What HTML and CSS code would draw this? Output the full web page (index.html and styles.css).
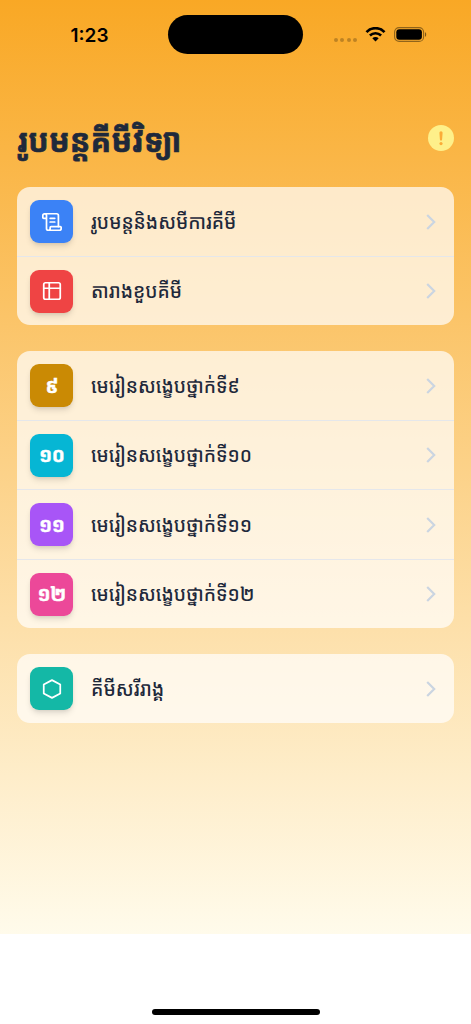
FILE: index.html
```html
<!DOCTYPE html>
<html lang="km">
<head>
<meta charset="utf-8">
<title>រូបមន្តគីមីវិទ្យា</title>
<link rel="stylesheet" href="styles.css">
</head>
<body>
<div class="screen">
  <div class="status">
    <span class="time">1:23</span>
    <span class="island"></span>
    <span class="signals">
      <span class="dots"><i></i><i></i><i></i><i></i></span>
      <svg class="wifi" viewBox="0 0 20 15"><path d="M1 5.1C6-.1 14-.1 19 5.1" fill="none" stroke="#000" stroke-width="2.7"/><path d="M4.4 8.5c3.2-3 8-3 11.2 0" fill="none" stroke="#000" stroke-width="2.6"/><path d="M6.8 11.2c1.8-1.6 4.6-1.6 6.4 0L10 14.6z"/></svg>
      <svg class="battery" viewBox="0 0 33 15"><rect x=".6" y=".6" width="29" height="13.8" rx="4.5" fill="none" stroke="#000" stroke-opacity=".42" stroke-width="1.1"/><rect x="2.3" y="2.3" width="25.6" height="10.4" rx="3"/><path d="M31 5.2c1.6.5 1.6 4.1 0 4.6z" fill-opacity=".5"/></svg>
    </span>
  </div>
  <header class="header">
    <h1 class="title">រូបមន្តគីមីវិទ្យា</h1>
    <svg class="alert" viewBox="0 0 26 26"><circle cx="13" cy="13" r="13" fill="#fef08a"/><path d="M11.4 7.8a1.6 1.6 0 0 1 3.2 0l-.5 6.8a1.1 1.1 0 0 1-2.2 0z" fill="#fbac38"/><circle cx="13" cy="18.6" r="1.6" fill="#fbac38"/></svg>
  </header>
  <main class="groups">
    <section class="card">
      <div class="row"><span class="tile blue"><svg class="icon" viewBox="0 0 24 24"><path d="M15 12h-5M15 8h-5M19 17V5a2 2 0 0 0-2-2H4"/><path d="M8 21h12a2 2 0 0 0 2-2v-1a1 1 0 0 0-1-1H11a1 1 0 0 0-1 1v1a2 2 0 1 1-4 0V5a2 2 0 1 0-4 0v2a1 1 0 0 0 1 1h3"/></svg></span><span class="label">រូបមន្តនិងសមីការគីមី</span><svg class="chevron" viewBox="0 0 10 16"><path d="M1.2 1 8.2 8l-7 7"/></svg></div>
      <div class="row"><span class="tile red"><svg class="icon" viewBox="0 0 24 24"><rect x="3" y="3" width="18" height="18" rx="2"/><path d="M3 9h18M9 3v18"/></svg></span><span class="label">តារាងខួបគីមី</span><svg class="chevron" viewBox="0 0 10 16"><path d="M1.2 1 8.2 8l-7 7"/></svg></div>
    </section>
    <section class="card">
      <div class="row"><span class="tile gold">៩</span><span class="label">មេរៀនសង្ខេបថ្នាក់ទី៩</span><svg class="chevron" viewBox="0 0 10 16"><path d="M1.2 1 8.2 8l-7 7"/></svg></div>
      <div class="row"><span class="tile cyan">១០</span><span class="label">មេរៀនសង្ខេបថ្នាក់ទី១០</span><svg class="chevron" viewBox="0 0 10 16"><path d="M1.2 1 8.2 8l-7 7"/></svg></div>
      <div class="row"><span class="tile purple">១១</span><span class="label">មេរៀនសង្ខេបថ្នាក់ទី១១</span><svg class="chevron" viewBox="0 0 10 16"><path d="M1.2 1 8.2 8l-7 7"/></svg></div>
      <div class="row"><span class="tile pink">១២</span><span class="label">មេរៀនសង្ខេបថ្នាក់ទី១២</span><svg class="chevron" viewBox="0 0 10 16"><path d="M1.2 1 8.2 8l-7 7"/></svg></div>
    </section>
    <section class="card">
      <div class="row"><span class="tile teal"><svg class="icon" viewBox="0 0 24 24"><path d="M12 2.3 21 7.1v9.8L12 21.7 3 16.9V7.1z"/></svg></span><span class="label organic">គីមីសរីរាង្គ</span><svg class="chevron" viewBox="0 0 10 16"><path d="M1.2 1 8.2 8l-7 7"/></svg></div>
    </section>
  </main>
</div>
<footer class="home"><span class="home-bar"></span></footer>
</body>
</html>
```
FILE: styles.css
```css
* { box-sizing: border-box; }
body {
  margin: 0;
  width: 471px;
  height: 1024px;
  overflow: hidden;
  background: #fff;
  color: #1e293b;
  font-family: "Noto Sans Khmer", "Khmer OS", "Noto Sans", sans-serif;
}
.screen {
  height: 933.5px;
  background: linear-gradient(#f9a825, #fffbeb);
}
.status {
  height: 69px;
  display: grid;
  grid-template-columns: 168px 135px 1fr;
  align-items: center;
}
.time {
  padding: 2px 0 0 11px;
  text-align: center;
  color: #000;
  font: 600 19px/24px Inter, sans-serif;
}
.island { height: 39px; border-radius: 20px; background: #000; }
.signals { display: flex; align-items: center; padding-left: 31px; }
.dots { display: flex; gap: 2.4px; padding-top: 11px; }
.dots i { width: 4px; height: 4px; border-radius: 50%; background: rgba(0, 0, 0, .24); }
.wifi { width: 21px; height: 15px; margin-left: 8px; }
.battery { width: 33px; height: 15px; margin-left: 8px; }
.header {
  height: 118.3px;
  padding: 0 17px 0 17px;
  display: flex;
  justify-content: space-between;
}
.title {
  margin: 49px 0 0;
  font-size: 33px;
  line-height: 44px;
  font-weight: 700;
  white-space: nowrap;
  transform: scaleX(.925);
  transform-origin: left;
  -webkit-text-stroke: .7px #1e293b;
}
.alert { width: 26px; height: 26px; margin-top: 56px; }
.groups { padding: 0 17.3px; display: flex; flex-direction: column; gap: 26px; }
.card { border-radius: 13px; background: rgba(255, 255, 255, .7); overflow: hidden; }
.row {
  height: 68.5px;
  padding: 0 18.2px 0 12.9px;
  display: flex;
  align-items: center;
}
.row + .row { height: 69.5px; border-top: 1px solid #e5e7eb; }
.tile {
  width: 43px;
  height: 43px;
  border-radius: 9px;
  display: flex;
  align-items: center;
  justify-content: center;
  color: #fff;
  font-size: 19.5px;
  line-height: 30px;
  font-weight: 700;
  letter-spacing: -.5px;
  -webkit-text-stroke: .4px #fff;
  box-shadow: 0 4px 6px -1px rgba(0, 0, 0, .12), 0 2px 4px -2px rgba(0, 0, 0, .1);
}
.blue { background: #3b82f6; }
.red { background: #ef4444; }
.gold { background: #ca8a04; }
.cyan { background: #06b6d4; }
.purple { background: #a855f7; }
.pink { background: #ec4899; }
.teal { background: #14b8a6; }
.icon { width: 22px; height: 22px; fill: none; stroke: #fff; stroke-width: 1.9; stroke-linecap: round; stroke-linejoin: round; }
.label {
  flex: 1;
  margin-left: 17.5px;
  font-size: 20px;
  line-height: 30px;
  font-weight: 500;
  white-space: nowrap;
  transform: translateY(-.5px) scaleX(.945);
  transform-origin: left;
}
.organic { transform: translateY(-.5px) scaleX(.955); }
.chevron { width: 10px; height: 16px; fill: none; stroke: #cbd5e1; stroke-width: 2.2; }
.home { height: 90.5px; display: flex; align-items: flex-end; justify-content: center; padding-bottom: 9px; }
.home-bar { width: 168px; height: 6px; border-radius: 3px; background: #000; }
```
